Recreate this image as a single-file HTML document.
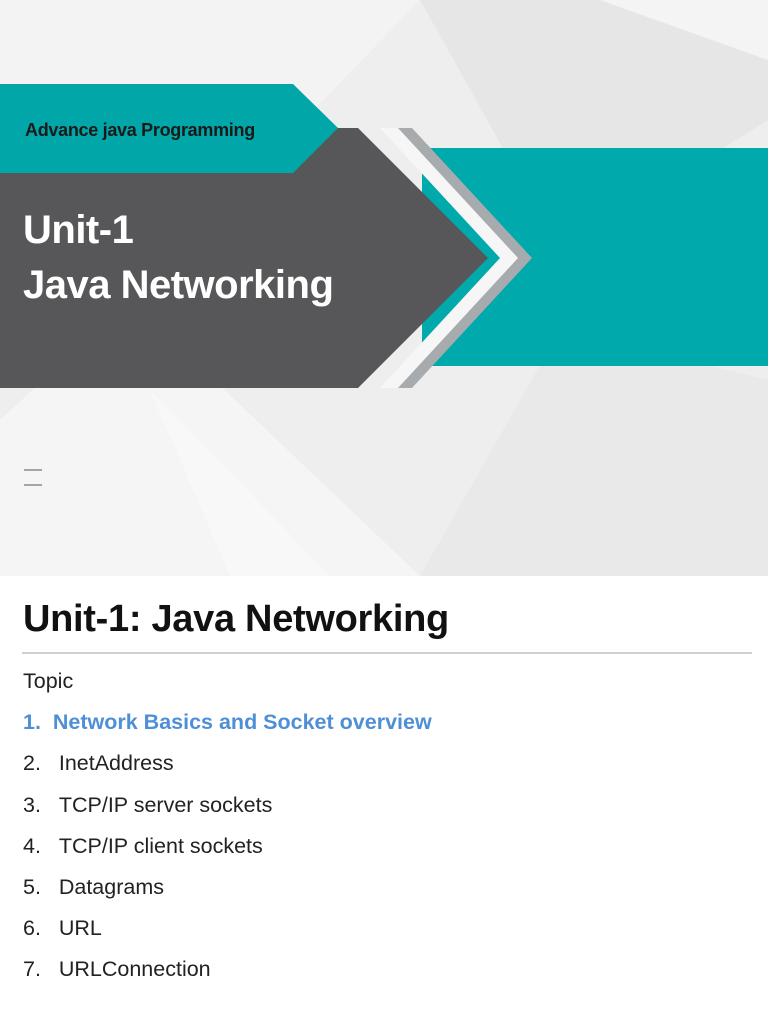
<!DOCTYPE html>
<html><head><style>
body{margin:0;width:768px;height:1024px;overflow:hidden;background:#fff;font-family:"Liberation Sans",sans-serif}
.s1{position:absolute;left:0;top:0;width:768px;height:576px;background:#eeeeee;overflow:hidden}
.s2{position:absolute;left:0;top:576px;width:768px;height:448px;background:#fff}
.t{position:absolute;white-space:nowrap}
</style></head><body>
<div class="s1">
<svg width="768" height="576" style="position:absolute;left:0;top:0">
<polygon points="0,0 420,0 130,300 0,200" fill="#f3f3f3"/>
<polygon points="420,0 768,0 768,120 560,250" fill="#e6e6e6"/>
<polygon points="130,300 420,576 0,576 0,420" fill="#f5f5f5"/>
<polygon points="420,576 768,576 768,380 560,330" fill="#e9e9e9"/>
<polygon points="150,390 330,576 230,576" fill="#f8f8f8"/>
<polygon points="600,0 768,0 768,60" fill="#f4f4f4"/>
<rect x="422" y="148" width="346" height="218" fill="#00a9ab"/>
<polygon points="392,128 412,128 532,258 412,388 392,388 512,258" fill="#a7abae"/>
<polygon points="380,128 398,128 518,258 398,388 380,388 500,258" fill="#f6f6f6"/>
<polygon points="0,128 358,128 488,258 358,388 0,388" fill="#575759"/>
<polygon points="0,84 293,84 338,128 293,173 0,173" fill="#00a6a8"/>
<line x1="24" y1="470" x2="42" y2="470" stroke="#555" stroke-width="1"/>
<line x1="24" y1="485" x2="42" y2="485" stroke="#555" stroke-width="1"/>
</svg>
<div class="t" style="left:25px;top:120px;font-size:18px;font-weight:bold;color:#1a1a1a;letter-spacing:-0.3px">Advance java Programming</div>
<div class="t" style="left:23px;top:203px;font-size:40px;color:#fff;line-height:55px;font-weight:bold;letter-spacing:-0.5px">Unit-1<br>Java Networking</div>
</div>
<div class="s2">
<div class="t" style="left:23px;top:22px;font-size:38px;font-weight:bold;color:#111;letter-spacing:-0.3px">Unit-1: Java Networking</div>
<div style="position:absolute;left:22px;top:76px;width:730px;height:2px;background:#d0d0d0"></div>
<div class="t" style="left:23px;top:85px;font-size:21.5px;color:#222;line-height:41.2px">Topic<br>
<span style="color:#4e8fd6;font-weight:bold">1.&nbsp;&nbsp;Network Basics and Socket overview</span><br>
2.&nbsp;&nbsp;&nbsp;InetAddress<br>3.&nbsp;&nbsp;&nbsp;TCP/IP server sockets<br>4.&nbsp;&nbsp;&nbsp;TCP/IP client sockets<br>5.&nbsp;&nbsp;&nbsp;Datagrams<br>6.&nbsp;&nbsp;&nbsp;URL<br>7.&nbsp;&nbsp;&nbsp;URLConnection</div>
</div>
</body></html>
